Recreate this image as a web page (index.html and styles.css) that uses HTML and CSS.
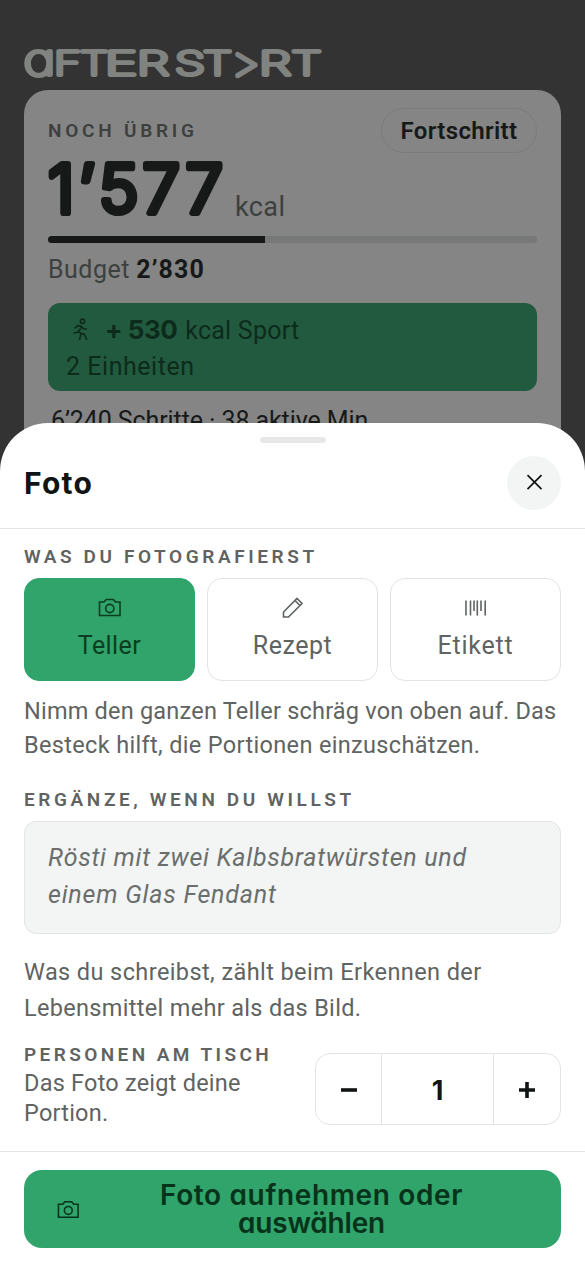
FILE: index.html
```html
<!DOCTYPE html>
<html lang="de">
<head>
<meta charset="utf-8">
<title>After Start</title>
<link rel="stylesheet" href="styles.css">
</head>
<body>
<div class="screen">
  <main class="app">
    <svg class="wordmark" width="300" height="34" viewBox="0 0 300 34" role="img" aria-label="AFTER START">
      <g class="wordmark-text">
        <text class="alpha" x="-.5" y="29" textLength="32" lengthAdjust="spacingAndGlyphs">a</text>
        <text x="30" y="29" textLength="27" lengthAdjust="spacingAndGlyphs">F</text>
        <text x="56" y="29" textLength="28" lengthAdjust="spacingAndGlyphs">T</text>
        <text x="81" y="29" textLength="32" lengthAdjust="spacingAndGlyphs">E</text>
        <text x="113" y="29" textLength="32" lengthAdjust="spacingAndGlyphs">R</text>
        <text x="151" y="29" textLength="30" lengthAdjust="spacingAndGlyphs">S</text>
        <text x="179" y="29" textLength="29" lengthAdjust="spacingAndGlyphs">T</text>
        <text class="chevron" x="207" y="30.500" textLength="29" lengthAdjust="spacingAndGlyphs">&gt;</text>
        <text x="235" y="29" textLength="32" lengthAdjust="spacingAndGlyphs">R</text>
        <text x="267.500" y="29" textLength="30" lengthAdjust="spacingAndGlyphs">T</text>
      </g>
    </svg>
    <section class="card">
      <div class="card-top">
        <span class="label label-card">NOCH ÜBRIG</span>
        <span class="pill">Fortschritt</span>
      </div>
      <div class="total">
        <svg class="total-num" width="184" height="83" viewBox="0 0 184 83"><text x="0" y="60" textLength="175" lengthAdjust="spacing">1’577</text></svg>
        <span class="total-unit">kcal</span>
      </div>
      <div class="bar"><div class="bar-fill"></div></div>
      <div class="budget"><span class="budget-word">Budget</span> <b>2’830</b></div>
      <div class="sport">
        <div class="sport-line">
          <svg class="runner" width="22" height="24" viewBox="0 0 22 24"><circle cx="16.500" cy="3.200" r="2.100"/><path d="M8.300 10.300 12 7.500 15.500 8.500 17.500 11H21M15.200 8.700 12.700 14.300M7.500 14.700 11 14.700 13 12.500M12.700 14.300 18.500 16.500 20.800 22M15 15.500 13.500 22"/></svg>
          <b>+ 530</b><span class="sport-text">kcal Sport</span>
        </div>
        <div class="sport-units">2 Einheiten</div>
      </div>
      <div class="steps">6’240 Schritte · 38 aktive Min.</div>
    </section>
  </main>

  <section class="sheet">
    <div class="grip"></div>
    <header class="sheet-head">
      <h1>Foto</h1>
      <button class="close" aria-label="Schliessen"><svg width="18" height="18" viewBox="0 0 18 18"><path d="M2.500 1.200 16.500 15.200M16.500 1.200 2.500 15.200"/></svg></button>
    </header>
    <div class="sheet-body">
      <div class="label">WAS DU FOTOGRAFIERST</div>
      <div class="tiles">
        <button class="tile tile-on">
          <svg class="icon" width="24" height="22" viewBox="0 0 24 22"><path d="M1.500 5H6L8.200 2.500H15.300L17.500 5H22V18.500H1.500Z"/><circle cx="11.800" cy="11.500" r="4.100"/></svg>
          <span class="w-teller">Teller</span>
        </button>
        <button class="tile">
          <svg class="icon" width="24" height="22" viewBox="0 0 24 22"><path d="M2.500 15 16 1.500 21 6.500 7.500 20H2.500ZM14 3.500 19 8.500"/></svg>
          <span class="w-rezept">Rezept</span>
        </button>
        <button class="tile">
          <svg class="icon" width="24" height="22" viewBox="0 0 24 22"><path d="M2 3.500V18.500M6.500 3.500V18.500M10 3.500V14M13.300 3.500V18.500M17 3.500V14M21.200 3.500V18.500"/></svg>
          <span class="w-etikett">Etikett</span>
        </button>
      </div>
      <p class="hint hint-photo"><span class="l1">Nimm den ganzen Teller schräg von oben auf. Das</span><br><span class="l2">Besteck hilft, die Portionen einzuschätzen.</span></p>
      <div class="label label-note">ERGÄNZE, WENN DU WILLST</div>
      <div class="note">Rösti mit zwei Kalbsbratwürsten und<br><span class="l3">einem Glas Fendant</span></div>
      <p class="hint hint-note">Was du schreibst, zählt beim Erkennen der<br><span class="l4">Lebensmittel mehr als das Bild.</span></p>
      <div class="people">
        <div class="people-text">
          <div class="label label-people">PERSONEN AM TISCH</div>
          <p class="hint hint-people">Das Foto zeigt deine<br>Portion.</p>
        </div>
        <div class="stepper">
          <button class="step" aria-label="Weniger"><svg width="18" height="18" viewBox="0 0 18 18"><path d="M1 10H17"/></svg></button>
          <span class="count">1</span>
          <button class="step" aria-label="Mehr"><svg width="18" height="18" viewBox="0 0 18 18"><path d="M1 10H17M9 2V18"/></svg></button>
        </div>
      </div>
    </div>
    <footer class="sheet-foot">
      <button class="cta">
        <svg class="icon" width="23" height="22" viewBox="0 0 24 22"><path d="M1.500 6H6L8.200 3.500H15.300L17.500 6H22V19.500H1.500Z"/><circle cx="11.800" cy="12.500" r="4.100"/></svg>
        <span class="cta-text">Foto aufnehmen oder<br><span class="l5">auswählen</span></span>
      </button>
    </footer>
  </section>
</div>
</body>
</html>
```
FILE: styles.css
```css
* { box-sizing: border-box; }
body { margin: 0; background: #333; font-family: Roboto, sans-serif; }
h1, p { margin: 0; font-weight: 400; }
button { margin: 0; padding: 0; border: 0; background: none; font: inherit; color: inherit; }
svg { display: block; flex: none; }

.screen { position: relative; width: 585px; height: 1266px; overflow: hidden; background: #333; }
.app { padding: 46px 24px 0; }

.wordmark { overflow: visible; margin-bottom: 10px; }
.wordmark-text { font: 100 33px Inter, sans-serif; font-feature-settings: "cv11"; fill: #80837f; stroke: #80837f; stroke-width: 4.2; stroke-linejoin: round; }
.wordmark-text .alpha { font-size: 43px; }
.wordmark-text .chevron { font-size: 42px; }

.card { height: 400px; padding: 18px 24px 0; border-radius: 24px; background: #858585; color: #161918; }
.card-top { display: flex; align-items: center; justify-content: space-between; height: 45px; }
.label { font-size: 19px; font-weight: 600; line-height: 20px; letter-spacing: 3.58px; color: #5f6362; white-space: nowrap; }
.label-card { color: #3c403f; letter-spacing: 3.76px; }
.pill { width: 156px; height: 45px; border: 1.5px solid #7a7c7b; border-radius: 23px; text-align: center; font-size: 24px; font-weight: 600; line-height: 45px; letter-spacing: .35px; }
.total { display: flex; height: 83px; }
.total-num { overflow: visible; font: 300 67px Inter, sans-serif; fill: #161918; stroke: #161918; stroke-width: 6.2; stroke-linejoin: round; }
.total-unit { padding: 37px 0 0 3px; font-size: 27px; line-height: 34px; letter-spacing: .4px; color: #3c403f; }
.bar { height: 7px; border-radius: 4px; background: #777978; overflow: hidden; }
.bar-fill { width: 216.5px; height: 7px; background: #161918; }
.budget { height: 60px; font-size: 25px; line-height: 53px; color: #161918; }
.budget-word { color: #3c403f; letter-spacing: .5px; }
.budget b { letter-spacing: 1.15px; }
.sport { height: 88px; padding: 9.5px 18px 0; border-radius: 12px; background: #225a3f; color: #0d2b1b; font-size: 25px; line-height: 36px; }
.sport-line { display: flex; align-items: center; height: 36px; }
.sport-line b { margin: -2px 8px 0 17px; font: 700 26px/36px Inter, sans-serif; letter-spacing: -.5px; }
.sport-text { letter-spacing: .24px; }
.sport-units { letter-spacing: .53px; }
.runner { margin-top: -2px; fill: none; stroke: #0d2b1b; stroke-width: 1.6; }
.steps { margin: 11.5px 0 0 3px; font-size: 25px; line-height: 36px; letter-spacing: -.1px; white-space: nowrap; }

.sheet { position: absolute; left: 0; top: 423px; width: 585px; height: 843px; padding-top: 14px; border-radius: 48px 48px 0 0; background: #fff; color: #111413; }
.grip { width: 66px; height: 6px; margin: 0 auto; border-radius: 3px; background: #e6e8e7; }
.sheet-head { display: flex; align-items: center; justify-content: space-between; height: 86px; padding: 13px 24px 18px; border-bottom: 1.5px solid #e2e4e3; }
h1 { font: 700 30px/54px Inter, sans-serif; letter-spacing: 1.2px; }
.close { display: grid; place-items: center; width: 54px; height: 54px; border-radius: 50%; background: #f2f5f4; }
.close svg { fill: none; stroke: #111413; stroke-width: 1.7; }

.sheet-body { height: 622px; padding: 17.5px 24px 0; }
.tiles { display: grid; grid-template-columns: repeat(3, 1fr); gap: 12px; margin-top: 11.5px; }
.tile { display: flex; flex-direction: column; align-items: center; height: 103px; padding-top: 18px; border: 1.5px solid #e2e4e3; border-radius: 15px; color: #5f6362; font-size: 25px; line-height: 30px; gap: 12px; }
.tile-on { border-color: #30a46b; background: #30a46b; color: #0b3d20; }
.icon { fill: none; stroke: currentColor; stroke-width: 1.6; }
.w-teller { letter-spacing: .43px; }
.w-rezept { letter-spacing: .53px; }
.w-etikett { letter-spacing: .75px; }

.hint { font-size: 23.5px; line-height: 34px; color: #5f6362; white-space: nowrap; }
.hint-photo { margin-top: 13px; }
.l1 { letter-spacing: .21px; }
.l2 { letter-spacing: .34px; }
.label-note { margin-top: 27.5px; letter-spacing: 3.61px; }
.note { height: 113px; margin-top: 11.5px; padding: 17px 23px; border: 1.5px solid #e2e5e4; border-radius: 12px; background: #f2f5f4; color: #6a6e6d; font-size: 25px; font-style: italic; line-height: 37px; letter-spacing: .72px; white-space: nowrap; }
.l3 { letter-spacing: .8px; }
.hint-note { margin-top: 20px; line-height: 36px; letter-spacing: .41px; }
.l4 { letter-spacing: .32px; }
.people { display: flex; justify-content: space-between; padding-top: 18.5px; }
.label-people { letter-spacing: 3.41px; }
.hint-people { margin-top: 3.5px; line-height: 30px; letter-spacing: .22px; }
.stepper { display: grid; grid-template-columns: 65px 1fr 66px; width: 246px; height: 72px; margin-top: 8.5px; border: 1.5px solid #e2e4e3; border-radius: 15px; }
.step { display: grid; place-items: center; }
.step svg { overflow: visible; fill: none; stroke: #111413; stroke-width: 3.6; }
.count { height: 70px; border: solid #e2e4e3; border-width: 0 1.5px; text-align: center; font: 700 27px/73px Inter, sans-serif; }

.sheet-foot { padding: 18px 24px; border-top: 1.5px solid #e2e4e3; }
.cta { display: flex; align-items: center; width: 537px; height: 78px; padding: 0 28px 0 33px; border-radius: 18px; background: #30a46b; color: #06331a; }
.cta-text { flex: 1; padding-left: 10px; text-align: center; font: 600 28px/28px Inter, sans-serif; font-feature-settings: "cv11"; letter-spacing: .65px; white-space: nowrap; }
.l5 { letter-spacing: -.2px; }
```
